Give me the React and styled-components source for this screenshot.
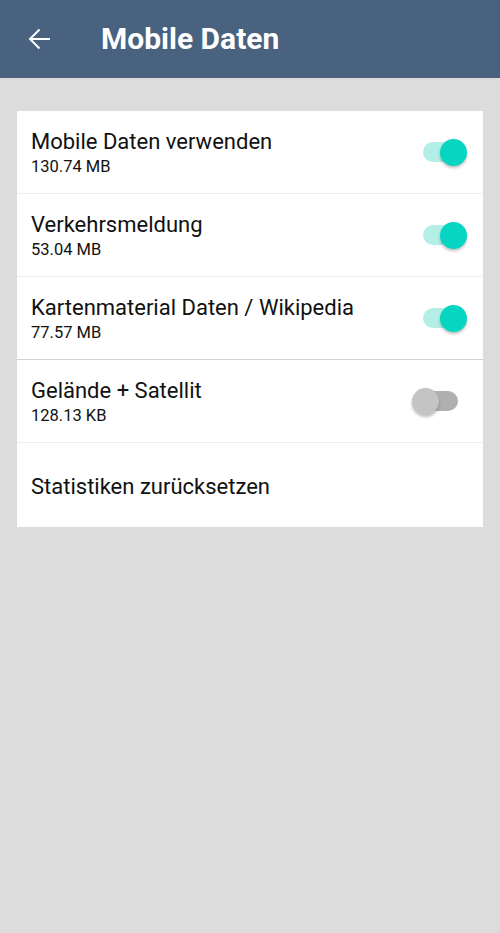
import React from "react";
import styled, { createGlobalStyle } from "styled-components";

const Global = createGlobalStyle`
  html, body { margin: 0; padding: 0; background: #dcdcdc; }
  body { font-family: Roboto, "Noto Sans", sans-serif; }
  * { box-sizing: border-box; }
`;

const Page = styled.div`
  width: 500px;
  min-height: 933px;
  background: #dcdcdc;
`;

const Toolbar = styled.header`
  height: 78px;
  background: #48627f;
  display: flex;
  align-items: center;
  padding-left: 27px;
  gap: 49px;
`;

const BackButton = styled.div`
  width: 25px;
  height: 26px;
  display: flex;
  align-items: center;
  justify-content: center;
`;

const Title = styled.h1`
  margin: 0;
  color: #ffffff;
  font-size: 30px;
  font-weight: 700;
  line-height: 36px;
`;

const Card = styled.div`
  margin: 33px 17px 0;
  background: #ffffff;
  display: flex;
  flex-direction: column;
`;

const Row = styled.div`
  height: ${(p) => p.$h || 83}px;
  display: flex;
  align-items: center;
  justify-content: space-between;
  padding: 0 16px 0 14px;
  border-bottom: 1px solid ${(p) => (p.$strong ? "#d3d3d3" : "#efefef")};
  &:last-child { border-bottom: none; }
`;

const Texts = styled.div`
  display: flex;
  flex-direction: column;
  gap: 2px;
  padding-top: 2px;
`;

const Label = styled.div`
  font-size: 22px;
  color: #111;
  line-height: 26px;
  padding-top: ${(p) => (p.$solo ? 3 : 0)}px;
`;

const Sub = styled.div`
  font-size: 16.5px;
  color: #111;
  line-height: 20px;
`;

const SwitchWrap = styled.div`
  position: relative;
  width: 46px;
  height: 28px;
  display: flex;
  align-items: center;
`;

const Track = styled.div`
  position: absolute;
  left: 2px;
  width: 35px;
  height: 20px;
  border-radius: 10px;
  background: ${(p) => (p.$on ? "#b3efe7" : "#b0b0b0")};
`;

const Thumb = styled.div`
  position: absolute;
  left: ${(p) => (p.$on ? 19 : -9)}px;
  width: 27px;
  height: 27px;
  border-radius: 50%;
  background: ${(p) => (p.$on ? "#06d6c1" : "#c4c4c4")};
  box-shadow: 0 2px 3px rgba(0, 0, 0, 0.25);
`;

const Switch = ({ on }) => (
  <SwitchWrap>
    <Track $on={on} />
    <Thumb $on={on} />
  </SwitchWrap>
);

const rows = [
  { label: "Mobile Daten verwenden", sub: "130.74 MB", on: true },
  { label: "Verkehrsmeldung", sub: "53.04 MB", on: true },
  { label: "Kartenmaterial Daten / Wikipedia", sub: "77.57 MB", on: true, strong: true },
  { label: "Gelände + Satellit", sub: "128.13 KB", on: false },
];

export default function App() {
  return (
    <Page>
      <Global />
      <Toolbar>
        <BackButton>
          <svg width="23" height="22" viewBox="0 0 23 22" fill="none">
            <path d="M22 11H2M11.5 1.5L2 11l9.5 9.5" stroke="#fff" strokeWidth="2" strokeLinecap="butt" strokeLinejoin="miter" />
          </svg>
        </BackButton>
        <Title>Mobile Daten</Title>
      </Toolbar>
      <Card>
        {rows.map((r) => (
          <Row key={r.label} $strong={r.strong}>
            <Texts>
              <Label>{r.label}</Label>
              <Sub>{r.sub}</Sub>
            </Texts>
            <Switch on={r.on} />
          </Row>
        ))}
        <Row $h={84}>
          <Label $solo>Statistiken zurücksetzen</Label>
        </Row>
      </Card>
    </Page>
  );
}
